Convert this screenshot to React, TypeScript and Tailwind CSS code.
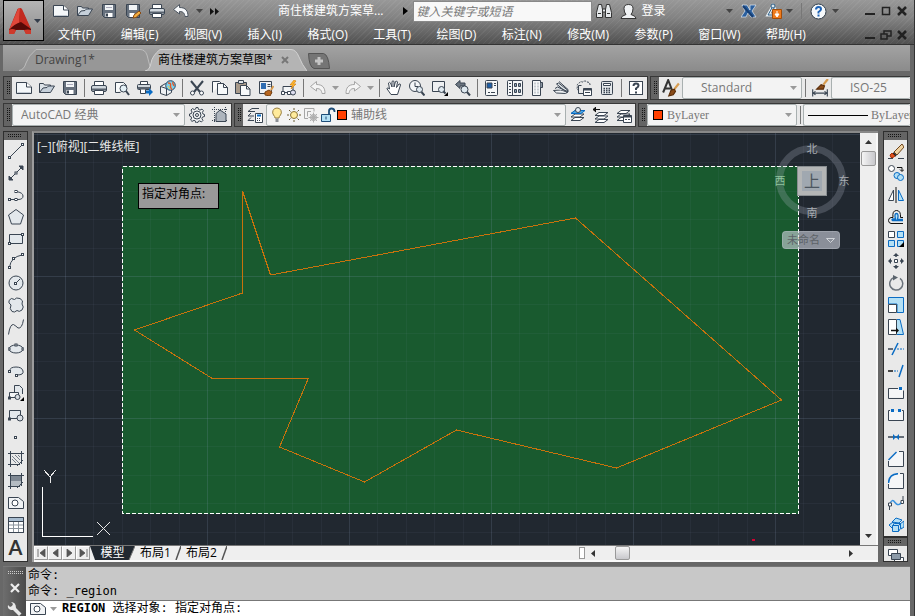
import React from 'react';

type Kids = { children?: React.ReactNode };

const INK = '#3a4552';
const BLUE = '#0a6cc4';
const SKY = '#b4e0f5';

function Icon({ children, size = 16 }: Kids & { size?: number }) {
  return (
    <svg width={size} height={size} viewBox="0 0 16 16" fill="none" stroke={INK} strokeWidth="1" aria-hidden="true" className="shrink-0">
      {children}
    </svg>
  );
}

/* ---------- file icons ---------- */
const NewIcon = () => (
  <Icon><path d="M.5 2.5h10l5 4.5v6.5H.5z" fill="#f4f7f9" /><path d="M10.5 2.5v4.5h5" fill="#fff" /><path d="M1.5 12.5h13" stroke="#c3cad2" /></Icon>
);
const OpenIcon = () => (
  <Icon><path d="M.5 12.5v-9h4l1 1.5h6V7" fill="#dde3e8" /><path d="M.5 12.5 4 8l4-.5 1.500-1.500h6l-4 6.500z" fill="#c6d0da" /></Icon>
);
const SaveIcon = () => (
  <Icon><path d="M1.500 1.500h13v13h-11l-2-2z" fill="#66707d" /><path d="M4 2h8v5H4z" fill="#f1f4f6" stroke="none" /><path d="M4.500 10h7v4h-7z" fill="#fff" stroke="none" /><path d="M5 10.500h2v3H5z" fill={INK} stroke="none" /><path d="M5 4.500h6" stroke="#aab" /></Icon>
);
const SaveAsIcon = () => (
  <Icon><path d="M1.500 1.500h13v13h-11l-2-2z" fill="#66707d" /><path d="M4 2h8v5H4z" fill="#f1f4f6" stroke="none" /><path d="M4.500 10h5v4h-5z" fill="#fff" stroke="none" /><path d="m8 15 1-3 5-4 2 2-5 4.500z" fill="#f6b040" stroke="#8a4b12" /></Icon>
);
const PrintIcon = () => (
  <Icon><path d="M3.500 5V1.500h9V5" fill="#fff" /><rect x=".5" y="5.500" width="15" height="6" rx="1.500" fill="#cfd6dc" /><path d="M1 9.500h14" strokeWidth="2" stroke="#59636f" /><path d="M3.500 10.500h9v4h-9z" fill="#fff" /></Icon>
);
const PreviewIcon = () => (
  <Icon><path d="M1.500 12.500v-10h8l3 3v3M1.500 12.500h5" fill="#f8fafb" /><circle cx="9.500" cy="8.500" r="3.500" fill="#e3f0f6" /><path d="m12 11 3 4" strokeWidth="2" /></Icon>
);
const PublishIcon = () => (
  <Icon><path d="M3.500 4V1.500h7V4" fill="#fff" /><rect x=".5" y="4.500" width="13" height="5" rx="1" fill="#cfd6dc" /><path d="M1 8h12" stroke="#59636f" strokeWidth="2" /><path d="M3.500 9.500v4h5v-4" fill="#fff" /><path d="M9 10.500h3V8l4 4-4 4v-2.500H9z" fill={BLUE} stroke="none" /></Icon>
);
const GlobeIcon = () => (
  <Icon><path d="m.5 6.500 5-3 6 1v8l-5 3-6-2z" fill="#eef1f3" /><path d="m.5 6.500 6 2 5-3M6.500 8.500v7" /><circle cx="10.500" cy="5.500" r="4.800" fill="#7fd0ea" stroke="#246" /><path d="M8 3c2 0 3 0 2.500 3s2 2 1 4M13 2c-1 2 1 3 1 4" stroke="#e0592a" strokeWidth="1.400" /><path d="M8 6c1 1 1 2 2 3" stroke="#f4d23c" /></Icon>
);
const CutIcon = () => (
  <Icon><path d="m2 1 9 11M14 1 5 12" strokeWidth="2" /><circle cx="3.500" cy="13" r="2" fill="#fff" /><circle cx="12.500" cy="13" r="2" fill="#fff" /></Icon>
);
const CopyIcon = () => (
  <Icon><path d="M.5 12.500V1.500h7l2 2" fill="#fafafa" /><path d="M5.500 14.500v-11h6l4 4v7z" fill="#f7f9fa" /><path d="M11.500 3.500v4h4" /></Icon>
);
const PasteIcon = () => (
  <Icon><path d="M.5 2.500h11v11H.5z" fill="#a89a8a" /><path d="M3.500.5h5v3h-5z" fill="#dfe4e8" /><path d="M5.500 15.500v-10h6l3.500 3.500v6.500z" fill="#f7f9fa" /><path d="M11.500 5.500V9H15" /></Icon>
);
const MatchIcon = () => (
  <Icon><path d="M1.500 1.500h12v12h-12z" fill="#f0f2f4" /><path d="M3 3h5v6H3z" fill="#2f6db2" stroke="none" /><path d="M9.500 4.500h3M9.500 6.500h3" /><path d="m15.500 6-2.500 4" stroke="#d79c50" strokeWidth="2" /><path d="m7 12 4-2 3 2-2 4-5-1z" fill="#b8661f" stroke="#7a420f" /></Icon>
);
const BlockEditIcon = () => (
  <Icon><path d="M2 6.500h10v6H2z" fill="#f4f6f7" /><path d="M.5 11.500h3v3h-3zM6.500 11.500h3v3h-3z" fill="#fff" /><circle cx="12" cy="12.500" r="2.500" fill="#dde" /><path d="M13 0 9 5h2.500L10 9l5-5h-2.500L15 1z" fill="#ffb52b" stroke="#cf7a0c" strokeWidth=".6" /></Icon>
);
const UndoIcon = ({ light = false }: { light?: boolean }) => (
  <Icon><path d="M6.500 1.500.5 6.500l6 4.500V8.500c4 0 5 2 5.500 5h3C15 8 13 4.500 6.500 4.500z" fill={light ? '#f6f8fa' : '#f4f4f4'} stroke={light ? '#4c5560' : '#a5a5a5'} /></Icon>
);
const RedoIcon = () => (
  <Icon><path d="m9.500 1.500 6 5-6 4.500V8.500c-4 0-5 2-5.500 5H1C1 8 3 4.500 9.500 4.500z" fill="#f4f4f4" stroke="#a5a5a5" /></Icon>
);
const HandIcon = () => (
  <Icon><path d="M5 14.500 .8 8.500q1-1.500 2.700.5L2.500 3q1-1.300 2 0L6 7V1.500q1-1.300 2 0V7l1.500-5.500q1.500-1 2 .5L10.500 7.500 13 4q1.500-.5 1.500 1l-3 9.500z" fill="#fff" /></Icon>
);
const ZoomClockIcon = () => (
  <Icon><circle cx="6" cy="6" r="5.500" fill="#f4f6f8" /><path d="M6 2.500v4h3" /><circle cx="10.500" cy="9.500" r="3" fill="#dfe9f0" /><path d="m12.500 12 3 3.500" strokeWidth="2" /></Icon>
);
const ZoomWindowIcon = () => (
  <Icon><path d="M.5 1.500h12v10H.5z" fill="#eef0f2" /><circle cx="9.500" cy="9.500" r="3" fill="#dfe9f0" /><path d="m11.500 11.500 2 2" strokeWidth="2" /><path d="M16 12v4h-4z" fill="#000" stroke="none" /></Icon>
);
const ZoomPrevIcon = () => (
  <Icon><path d="M5 .5.5 4.500 5 8.500V6h5V3H5z" fill="#6b7580" /><circle cx="9.500" cy="9.500" r="3.500" fill="#dfe9f0" /><path d="m12 12 3 3.500" strokeWidth="2" /></Icon>
);
const PropsIcon = () => (
  <Icon><rect x="1.500" y=".5" width="12" height="15" rx="1" fill="#f5f7f8" /><path d="M3 3h5v5H3z" fill="#1c5fa8" /><path d="M10 3.500h2M10 5.500h2M4 12.500h2M7 12.500h4" /></Icon>
);
const DesignIcon = () => (
  <Icon><rect x=".5" y=".5" width="15" height="15" rx="1" fill="#f5f7f8" /><path d="M5.500 1v14" /><path d="M2 3.500h2M2 6.500h2M2 9.500h2M2 12.500h2" /><path d="M7.500 3.500h2v3h-2zM11.500 3.500h2v3h-2zM7.500 9.500h2v3h-2zM11.500 9.500h2v3h-2z" fill="#8aa0b5" /></Icon>
);
const PaletteIcon = () => (
  <Icon><path d="M2.500.5h8v15h-8z" fill="#f5f7f8" /><path d="M10.500 2.500h2v5h-2" fill="#8894a0" /><path d="M4.500 3.500h1M7.500 3.500h1M4.500 6.500h1M7.500 6.500h1M4.500 9.500h1M7.500 9.500h1M4.500 12.500h1M7.500 12.500h1" strokeWidth="2" stroke="#9aa3ac" /></Icon>
);
const SheetIcon = () => (
  <Icon><path d="m.5 10.500 7-.5 7.500 2-2.500 1.500-9-.5z" fill="#eef1f3" /><path d="M2 8.500 4.500 7l10 4.500M3.500 4l2-1 9 7-1 2.500z" fill="#dfe4e8" /><path d="m6 1.500 9 8V12" /></Icon>
);
const MarkupIcon = () => (
  <Icon><path d="M3 10.500q-3-1-1.500-3.500-1-3 1.500-3.500 1-2.500 3.500-1.500Q9 0 11 2q3 0 3 3" strokeDasharray="2 1" /><path d="M5.500 5.500h-3v8h5" /><path d="M7.500 8.500h8v7h-8z" fill="#fff" /><path d="M7.500 9.500h8" strokeWidth="2" /><path d="M9 12.500h5" /></Icon>
);
const CalcIcon = () => (
  <Icon><rect x="2.500" y="1.500" width="11" height="13" rx="1" fill="#e4e8eb" /><path d="M4.500 3.500h7v2h-7z" fill="#fff" /><path d="M4.500 8.500h7M4.500 10.500h7M4.500 12.500h7" strokeDasharray="1.500 1" strokeWidth="1.300" /></Icon>
);
const HelpBoxIcon = () => (
  <Icon><rect x="1.500" y="1.500" width="13" height="13" fill="#fff" /><path d="M5.500 6q0-2.500 2.500-2.500t2.500 2.200Q10.500 7 8 8.500V10" strokeWidth="2" /><path d="M7 11.500h2v2H7z" fill={INK} stroke="none" /></Icon>
);
const TextStyleIcon = () => (
  <Icon size={18}><path d="m1 12 4.500-11L9 10M2.500 8.500h5" strokeWidth="1.800" stroke="#333" /><path d="m15 4-4 5" stroke="#d79c50" strokeWidth="2" /><path d="m6 15 2-5 3-1 1 2-2 3z" fill="#8a4b18" stroke="#5a2d08" /></Icon>
);
const DimStyleIcon = () => (
  <Icon size={18}><path d="M1.500 9v6.500M14.500 9v6.500M2 12.500h12" /><path d="m4 11-2 1.500L4 14M12 11l2 1.500-2 1.500" /><path d="m15 0-4 5" stroke="#d79c50" strokeWidth="2" /><path d="m5 9 4-4 3 1-1 3z" fill="#8a4b18" stroke="#5a2d08" /></Icon>
);
const GearIcon = () => (
  <Icon><path d="M7 .5h2l.5 2 1.500.6 2-1 1.400 1.400-1 2 .6 1.500 1.500.5v2l-2 .5-.6 1.500 1 2-1.400 1.400-2-1-1.500.6-.5 1.500H7l-.5-2-1.500-.6-2 1-1.400-1.400 1-2L2 9.500.5 9V7l2-.5L3 5 2 3l1.400-1.400 2 1 1.300-.6z" fill="#eef0f1" /><circle cx="8" cy="8" r="4" /><circle cx="8" cy="8" r="1.500" /></Icon>
);
const WorkspaceIcon = () => (
  <Icon><path d="M2.500 0v16M13.500 0v16M0 2.500h16M0 13.500h16" strokeDasharray="1 1" /><path d="M4 14.500v-8L8 3l6 4v7.500z" fill="#aeb5bd" /></Icon>
);
const Layers = () => <path d="m1 6.500 4-3h9l-4 3zM1 10l4-3h9l-4 3zM1 13.500l4-3h9l-4 3z" fill="#fff" />;
const LayerPropsIcon = () => (
  <Icon><path d="m1 4.500 4-3h7M1 4.500h7M1 9l3-3M1 9h6M1 13.500l3-3M1 13.500h6" /><path d="M8.500 6.500h7v9h-7z" fill="#fff" /><path d="M10 8.500h4" stroke={BLUE} strokeWidth="2" /><path d="M10 11.500h4M10 13.500h4" strokeDasharray="1 1" /></Icon>
);
const LayerCurrentIcon = () => (
  <Icon><Layers /><path d="m1 6.500 4-3h10l-4 3z" fill="#4fa9e6" stroke={BLUE} /><circle cx="8" cy="3" r="2.500" fill="#e6eef4" /></Icon>
);
const LayerPrevIcon = () => (
  <Icon><g transform="translate(1 2)"><Layers /></g><path d="M0 2.500h7M3 0 0 2.500 3 5" stroke="#111" fill="#111" /></Icon>
);
const LayerStateIcon = () => (
  <Icon><Layers /><path d="M7.500 8.500h8v7h-8z" fill="#fff" /><path d="M7.500 9.500h8" strokeWidth="2" /><path d="M9 12.500h5" strokeDasharray="2 1" /></Icon>
);
const BulbIcon = () => (
  <Icon><path d="M6 11Q6 9.500 4.500 8 3 6 4 3.500T8 1t4 2.500T11.500 8Q10 9.500 10 11z" fill="#ffeb9c" stroke="#9a8040" /><path d="M6.500 11.500h3V15h-3z" fill="#8b8f94" stroke="none" /></Icon>
);
const SunIcon = () => (
  <Icon><circle cx="8" cy="8" r="3.500" fill="#ffeb9c" stroke="#8d7433" /><path d="M8 1v2M8 13v2M1 8h2M13 8h2M3 3l1.500 1.500M11.500 11.500 13 13M13 3l-1.500 1.500M4.500 11.500 3 13" stroke="#6b5d35" /></Icon>
);
const VpFreezeIcon = () => (
  <Icon><path d="M11 4.500v-3H1.500v10H5" stroke="#a5a5a5" /><path d="M8 4.500H4.500v5" stroke="#a5a5a5" /><circle cx="10.500" cy="10.500" r="3" fill="#ccc" stroke="#aaa" /><path d="M10.500 5.500v10M5.500 10.500h10M7 7l7 7M14 7l-7 7" stroke="#b0b0b0" /></Icon>
);
const LockIcon = () => (
  <Icon><path d="M9 7.500V4q0-2.500 2.500-2.500T14.500 4v1" strokeWidth="1.800" stroke="#1e4d78" /><path d="M1.500 7.500h9v7h-9z" fill={SKY} stroke="#1e4d78" /><path d="M6 9.500v3" stroke="#1e4d78" /></Icon>
);

/* ---------- draw icons ---------- */
const node = (x: number, y: number) => <rect key={`${x}-${y}`} x={x - 1} y={y - 1} width="2" height="2" fill="#fff" />;
const DRAW: [string, React.ReactNode][] = [
  ['直线', <><path d="m2 14 12-12" />{node(1.5, 14.5)}{node(14.5, 1.5)}</>],
  ['构造线', <><path d="M1 15 15 1" /><path d="M11 1h4v4zM1 11v4h4z" fill={INK} />{node(8, 8)}</>],
  ['多段线', <><path d="M2 12.500h8q5 0 5-3.500T8 4.500" />{node(1.5, 12.5)}{node(8, 12.5)}{node(8, 4.5)}</>],
  ['多边形', <path key="p" d="m8 .5 7.500 5.500-3 9h-9L.5 6z" fill="#e3e8ec" />],
  ['矩形', <><path d="M1.500 3.500h13v9h-13z" fill="#e3e8ec" />{node(1.5, 12.5)}{node(14.5, 3.5)}</>],
  ['圆弧', <><path d="M1.500 14Q3 4 14 2" />{node(1.5, 14.5)}{node(5.5, 5.5)}{node(14.5, 1.5)}</>],
  ['圆', <><circle cx="8" cy="8" r="7" fill="#e3e8ec" /><path d="m8 8 4-4" />{node(7.5, 8.5)}</>],
  ['修订云线', <path key="p" d="M3 8Q0 6 1 3.500 3 0 6.500 2.500 8 0 12 1.500q4 2 2 5.500 2.500 3 0 6-3 2.500-5 .5-2.500 2.500-5 1-3-2.500-1-6.500z" fill="#e3e8ec" />],
  ['样条曲线', <path key="p" d="M.5 15.500Q2 5 5.500 5.500 8 7 10 9q4 1 5.500-8.500" />],
  ['椭圆', <><ellipse cx="8" cy="8" rx="7" ry="4" fill="#e3e8ec" />{node(1, 8)}{node(15, 8)}{node(8, 4)}</>],
  ['椭圆弧', <><path d="M1.500 8Q2 4 8 4t7 4-6 4" fill="#e3e8ec" />{node(1.5, 8.5)}{node(8.5, 12.5)}</>],
  ['插入块', <><path d="M6.500 7V.5h5l3 3V9" fill="#e3e8ec" /><path d="M1.500 7.500h9v5h-9z" fill="#f4f6f7" />{node(1.5, 13)}<circle cx="9.500" cy="12" r="2.500" fill="#d9dee3" /><path d="M16 12v4h-4z" fill="#000" stroke="none" /></>],
  ['创建块', <><path d="M1.500 3.500h11v8h-11z" fill="#e3e8ec" />{node(1.5, 12)}<circle cx="12" cy="11" r="3" fill="#d9dee3" /></>],
  ['点', node(7.5, 8.5)],
  ['图案填充', <><path d="M2.500 0v16M13.500 0v13M0 2.500h16M0 13.500h12" /><path d="m4 5 7 7M4 8l4 4M7 4l5 5M10 4l2 2" stroke="#77818c" /><path d="m9 15 6-6" /></>],
  ['渐变色', <><path d="M3 3h10v10H3z" fill="#b4bbc2" stroke="none" /><path d="M3 3h10v5H3z" fill="#7f8893" stroke="none" /><path d="M2.500 0v16M13.500 0v13M0 2.500h16M0 13.500h12M9 15l6-6" /></>],
  ['面域', <><path d="M.5 2.500h10l5 4v7H.5z" fill="#f1f3f5" /><circle cx="7" cy="8" r="3" fill="#fff" /></>],
  ['表格', <><path d="M.5.5h15v15H.5z" fill="#fff" /><path d="M1 1h14v3.500H1z" fill="#a9bdd0" stroke="none" /><path d="M1 8h14M1 11.500h14M5.500 5v10M10.500 5v10" stroke="#8a939c" /><path d="M.5.5h15v15H.5zM.5 4.500h15" /></>],
];

/* ---------- modify icons ---------- */
const MODIFY: [string, React.ReactNode][] = [
  ['删除', <><path d="M0 15.500h5M10 15.500h6" /><path d="m6 9 8-8 2 3-7 8z" fill="#efd3a2" stroke="#6f451c" /><path d="m5 10 3 3" stroke="#222" strokeWidth="2" /><path d="m2 12 2-2 3 3-2 1.500H3z" fill="#e0501c" stroke="#a4330b" /></>],
  ['复制', <><circle cx="3.500" cy="3.500" r="3" fill="#fff" /><path d="M9 2.500h5V6M12 4.500l2 2 2-2" stroke="#111" /><circle cx="9" cy="10.500" r="3" fill={SKY} stroke={BLUE} /><circle cx="12.500" cy="12.500" r="3" fill={SKY} stroke={BLUE} /></>],
  ['镜像', <><path d="M5.500 3v10.500H.5z" fill="#fff" /><path d="M10.500 3v10.500h5z" fill={SKY} stroke={BLUE} /><path d="M8 0v16" stroke="#111" /></>],
  ['偏移', <><path d="M15 14.500H3q-2.500-.5-2.500-3T3 8.500h2Q4 1.500 8.500 1.500t4 7H15" stroke="#111" /><path d="M15 11.500H4.500q-1-.8 0-1.500h3Q6 4.500 8.500 4.500T9.500 10.500H15" stroke={BLUE} strokeWidth="1.300" fill={SKY} /></>],
  ['阵列', <><path d="M.5.5h6v6h-6z" fill="#fff" /><path d="M9.500.5h6v6h-6zM.5 9.500h6v6h-6zM9.500 9.500h6v6h-6z" fill={SKY} stroke={BLUE} /><path d="M16 11v5h-5z" fill="#000" stroke="none" /></>],
  ['移动', <><path d="M8 1v3M8 12v3M1 8h3M12 8h3" strokeWidth="1.500" /><path d="M6.500 6.500h3v3h-3z" fill="#fff" /><path d="m8 0 3 3H5zM8 16l3-3H5zM0 8l3-3v6zM16 8l-3-3v6z" fill={INK} stroke="none" /></>],
  ['旋转', <><path d="M6 2.500a6.500 6.500 0 1 0 6 .8" strokeWidth="1.500" stroke="#6b737c" /><path d="m5 0 5 2.500-5 3z" fill="#5a636c" stroke="none" /></>],
  ['缩放', <><path d="M.5.5h15v15H9V7H.5z" fill={SKY} stroke={BLUE} /><path d="M.5 7.500h8v8h-8z" fill="#fff" /></>],
  ['拉伸', <><path d="M.5.5h8v15h-8z" fill="#fff" /><path d="M9 .5h3l3.500 15H9" fill={SKY} stroke={BLUE} /><path d="M3 11.500h6" stroke="#111" strokeWidth="1.500" /><path d="m8 8.500 3 3-3 3z" fill="#111" stroke="none" /></>],
  ['修剪', <><path d="M0 8h5" strokeWidth="1.500" /><path d="M4 14 10 2" stroke={BLUE} strokeWidth="1.500" /><path d="M9 8h7" stroke={BLUE} strokeDasharray="2 1" /></>],
  ['延伸', <><path d="M0 8h5" stroke="#111" strokeWidth="1.500" /><path d="M6 8h4" stroke={BLUE} strokeDasharray="2 1" /><path d="m11 14 4-12" stroke={BLUE} strokeWidth="1.500" /></>],
  ['打断于点', <><path d="M1 4h14v8.500H1z" fill="#f5f6f7" stroke="none" /><path d="M.5 13.500v-10H10M.5 13.500h15v-8" /><path d="M11 2h3v3h-3z" fill={BLUE} stroke="none" /></>],
  ['打断', <><path d="M1 4h14v9H1z" fill="#f5f6f7" stroke="none" /><path d="M2 3.500H.5v10h15v-10H14" /><path d="M3 2h3v3H3zM10 2h3v3h-3z" fill={BLUE} stroke="none" /></>],
  ['合并', <><path d="M0 8h16" strokeWidth="1.500" /><path d="M5 5v6l3-3 3 3V5L8 8z" fill={BLUE} stroke="none" /></>],
  ['倒角', <><path d="M.5 9v6.500h15V.5H9L.5 9z" fill="#f5f6f7" stroke="none" /><path d="M.5 10v5.500h15V.5H11" /><path d="m.5 9 8-8" stroke={BLUE} strokeWidth="1.500" /></>],
  ['圆角', <><path d="M.5 10v5.500h15V.5H11Q1 1 .5 10z" fill="#f5f6f7" stroke="none" /><path d="M.5 11v4.500h15V.5H12" /><path d="M.5 10Q1 1 10 .7" stroke={BLUE} strokeWidth="1.500" /></>],
  ['光顺曲线', <><path d="M2 9Q4 3 7 7.500t7-.5" stroke="#3b93e0" strokeWidth="1.500" /><path d="M1.500 8v7M15 1v6" /><path d="M.5 8h3v3h-3zM13 5.500h2.500v3H13z" fill="#fff" /></>],
  ['分解', <><path d="m4 5 4-4 6 2-3 3zM1 8l4-3 2 3-3 3zM12 7l4-3v6l-3 2z" fill={SKY} stroke={BLUE} /><path d="M4.500 8.500h6v6h-6zM4.500 8.500l2-2h6l-2 2M10.500 14.500l2-3v-5" fill={SKY} stroke={BLUE} /></>],
];

/* ---------- small parts ---------- */
function Caret({ color = '#9a9a9a' }: { color?: string }) {
  return <svg width="7" height="4" viewBox="0 0 7 4" aria-hidden="true" className="shrink-0"><path d="M0 0h7L3.500 4z" fill={color} /></svg>;
}
function Tool({ label, children }: Kids & { label: string }) {
  return <button aria-label={label} className="flex w-[23px] shrink-0 items-center justify-center self-stretch">{children}</button>;
}
function More({ color }: { color?: string }) {
  return <button aria-label="更多" className="flex w-3 shrink-0 items-center justify-center self-stretch"><Caret color={color} /></button>;
}
function Sep() {
  return <span className="flex w-1.5 shrink-0 justify-center self-stretch py-0.5"><span className="w-px bg-[#777]" /></span>;
}
const DOTS = 'bg-[conic-gradient(#151515_25%,transparent_0)] bg-[size:2px_2px]';
function Grip() {
  return <span className="flex w-2 shrink-0 items-center justify-center self-stretch bg-[#646464]"><span className={`h-3.5 w-1 ${DOTS}`} /></span>;
}
function Bar({ children, grow = false }: Kids & { grow?: boolean }) {
  return <div className={`flex h-6 items-center border border-[#383838] bg-[#e9e9e9] ${grow ? 'min-w-0 flex-1 border-r-0' : 'shrink-0'}`}><Grip />{children}</div>;
}
function Combo({ label, value, width, pad = 'pl-2', text = 'font-[Open_Sans,Noto_Sans_CJK_SC,sans-serif]', lead, caret = true }: { label: string; value: string; width: string; pad?: string; text?: string; lead?: React.ReactNode; caret?: boolean }) {
  return (
    <label className={`flex h-[22px] items-center overflow-hidden rounded-xs border border-[#a9b0b0] bg-[#f3f3f3] ${width}`}>
      {lead}
      <select aria-label={label} className={`min-w-0 flex-1 appearance-none bg-transparent text-xs text-[#777] outline-none ${pad} ${text}`}>
        <option>{value}</option>
      </select>
      {caret && <span className="shrink-0 pr-1"><Caret /></span>}
    </label>
  );
}
const SwatchBox = () => <span className="h-2.5 w-2.5 shrink-0 border border-black bg-[#ff4000]" />;

/* ---------- title ---------- */
const MENUS = ['文件(F)', '编辑(E)', '视图(V)', '插入(I)', '格式(O)', '工具(T)', '绘图(D)', '标注(N)', '修改(M)', '参数(P)', '窗口(W)', '帮助(H)'];

function WindowButtons({ restore = false }: { restore?: boolean }) {
  return (
    <div className="ml-auto flex shrink-0 items-center pr-1">
      <button aria-label="最小化" className="flex w-4 justify-center"><svg width="10" height="10" viewBox="0 0 10 10"><path d="M0 7h10v2H0z" fill="#222" /></svg></button>
      <button aria-label="最大化" className="flex w-4 justify-center">
        <svg width="12" height="10" viewBox="0 0 12 10" fill="none" stroke="#222" strokeWidth="1.500">{restore ? <path d="M1 4h6v5H1zM4 4V1h7v5H7" /> : <path d="M2.500 1.500h7v7h-7z" />}</svg>
      </button>
      <button aria-label="关闭" className="flex w-4 justify-center"><svg width="10" height="10" viewBox="0 0 10 10"><path d="m1 1 8 8M9 1 1 9" stroke="#222" strokeWidth="2.500" /></svg></button>
    </div>
  );
}

function Header() {
  return (
    <header className="flex h-[45px] shrink-0 border-b border-[#333] bg-[repeating-linear-gradient(135deg,rgba(255,255,255,0.05)_0_1px,transparent_1px_4px),linear-gradient(#989898,#838383_40%,#505050)] pl-[3px]">
      <button aria-label="应用程序菜单" className="flex h-[41px] w-[41px] shrink-0 items-center justify-between border border-black bg-linear-to-b from-[#b4b4b4] to-[#8c8c8c] pr-0.5 pl-1">
        <svg width="24" height="30" viewBox="0 0 24 30" aria-hidden="true">
          <path d="M9.500 3q2-1.500 4 0L23 24v4h-5l-2-4H8l-2 4H1v-4z" fill="#b52218" />
          <path d="M10 3q1-1 2-1l-1 15L1 24z" fill="#e0473a" />
          <path d="M12 2q1 0 2 1l9 20-12-6z" fill="#c22a1f" />
          <path d="M1 24q5-6 12-8l10 7v2q-9-2-16-1z" fill="#560a07" />
          <path d="M1 24q3-2 7 0l-2 4H1zM16 24q4-1 7 0v4h-5z" fill="#cf3a2c" />
        </svg>
        <Caret color="#333c4a" />
      </button>
      <div className="flex min-w-0 flex-1 flex-col">
        <div className="flex h-[22px] items-center text-xs text-white">
          <div className="ml-[5px] flex h-full items-center gap-px">
            <Tool label="新建"><NewIcon /></Tool><Tool label="打开"><OpenIcon /></Tool><Tool label="保存"><SaveIcon /></Tool>
            <Tool label="另存为"><SaveAsIcon /></Tool><Tool label="打印"><PrintIcon /></Tool><Tool label="放弃"><UndoIcon light /></Tool>
            <More color="#444" />
            <button aria-label="展开" className="flex w-4 justify-center"><svg width="9" height="7" viewBox="0 0 9 7"><path d="m0 0 4 3.500L0 7zM5 0l4 3.500L5 7z" fill="#111" /></svg></button>
          </div>
          <h1 className="ml-14 shrink-0">商住楼建筑方案草...</h1>
          <svg width="5" height="8" viewBox="0 0 5 8" aria-hidden="true" className="ml-5 shrink-0"><path d="m0 0 5 4-5 4z" fill="#000" /></svg>
          <input aria-label="搜索" placeholder="键入关键字或短语" className="ml-[5px] h-[21px] w-[179px] shrink-0 border border-[#888] bg-[#f8f8f8] px-0.5 text-xs text-[#666] italic outline-none placeholder:text-[#777]" />
          <button aria-label="查找" className="ml-1 shrink-0">
            <svg width="16" height="16" viewBox="0 0 16 16" fill="#e5e8ea" stroke="#333"><path d="M2.500 1.500h3l1 5v8h-6v-5zM10.500 1.500h3l2 8v5h-6v-8z" /><path d="M6.500 6h3v3h-3zM2 10.500h3M11 10.500h3" /></svg>
          </button>
          <button className="ml-2 flex shrink-0 items-center gap-1">
            <svg width="17" height="17" viewBox="0 0 17 17" fill="#f0f2f4" stroke="#333"><path d="M1 15.500q0-2.500 5-4-2-2-2-6t4.500-4 4.500 4-2 6q5 1.500 5 4z" /></svg>
            登录
          </button>
          <div className="ml-[58px] flex h-full shrink-0 items-center">
            <More color="#444" />
            <button aria-label="Exchange" className="ml-1.5"><svg width="16" height="14" viewBox="0 0 16 14"><path d="M1 1h5l3 5V1h6l-4 6 4 6h-5l-3-4-2 4H0l4-6z" fill="#2a5f9e" stroke="#e4edf5" strokeWidth=".7" /><path d="m2 2 10 11" stroke="#173e73" strokeWidth="2" /></svg></button>
            <button aria-label="连接" className="ml-2"><svg width="18" height="16" viewBox="0 0 18 16"><path d="M8 3 3 12h10z" fill="none" stroke="#e8f0f5" strokeWidth="3" /><path d="M8 3 3 12h8z" fill="none" stroke="#2c5d85" /><circle cx="8" cy="3" r="2" fill="#dbe6ee" stroke="#2c5d85" /><path d="M7.500 6.500h9v9h-9z" fill="#f07c1d" stroke="#a34c08" /><path d="M12 8v3m-2 0h4l-2 3z" fill="#fff" stroke="#fff" /></svg></button>
            <More color="#444" />
            <span className="mx-1.5 h-4 w-px bg-[#777]" />
            <button aria-label="帮助" className="ml-0.5"><svg width="17" height="17" viewBox="0 0 17 17"><circle cx="8.500" cy="8.500" r="7.500" fill="#f6f9fb" stroke="#34404c" /><path d="M6 6.500Q6 4 8.500 4T11 6.300Q11 7.500 8.500 9v1.500" fill="none" stroke="#1d62b5" strokeWidth="2" /><path d="M7.500 11.500h2v2h-2z" fill="#1d62b5" /></svg></button>
            <span className="ml-0.5 flex h-full"><More color="#444" /></span>
          </div>
          <WindowButtons />
        </div>
        <div className="flex h-[22px] items-center pt-[3px] text-xs text-white">
          <nav className="flex w-[762px] shrink-0 justify-between pl-3.5">
            {MENUS.map((m) => <button key={m}>{m}</button>)}
          </nav>
          <WindowButtons restore />
        </div>
      </div>
    </header>
  );
}

function FileTabs() {
  return (
    <div className="mr-1 ml-[3px] flex h-[26px] shrink-0 items-end bg-linear-to-b from-[#a3a3a3] to-[#8b8b8b] pl-4 text-xs">
      <button className="relative flex h-[22px] w-[132px] items-center pl-4 text-[#444]">
        <svg width="132" height="22" viewBox="0 0 132 22" aria-hidden="true" className="absolute inset-0"><path d="M0 21.500Q5 21 7 14T17 .5H121Q126 .5 128 6l4 15.500" fill="#979797" stroke="#bdbdbd" /></svg>
        <span className="relative">Drawing1*</span>
      </button>
      <div className="relative -ml-1.5 flex h-[22px] w-[162px] items-center justify-between pr-[18px] pl-[13px] text-black">
        <svg width="162" height="22" viewBox="0 0 162 22" aria-hidden="true" className="absolute inset-0"><path d="M0 22Q5 21 6 14T15 .5H146Q151 .5 154 8T162 22" fill="#b4b4b4" stroke="#d2d2d2" /></svg>
        <button className="relative">商住楼建筑方案草图*</button>
        <button aria-label="关闭图形" className="relative"><svg width="8" height="8" viewBox="0 0 8 8"><path d="m1 1 6 6M7 1 1 7" stroke="#777" strokeWidth="2" /></svg></button>
      </div>
      <button aria-label="新图形" className="mb-0.5"><svg width="24" height="16" viewBox="0 0 24 16"><path d="M1.500.5h15q5 1 6 15H7Q2 14 1.500.5z" fill="#757575" stroke="#555" /><path d="M12 4v8M8 8h8" stroke="#c4c4c4" strokeWidth="3" /></svg></button>
    </div>
  );
}

function Toolbars() {
  return (
    <div className="mr-1 ml-[3px] flex shrink-0 flex-col gap-[3px] pt-[5px]">
      <div className="flex gap-0.5">
        <Bar>
          <Tool label="新建"><NewIcon /></Tool><Tool label="打开"><OpenIcon /></Tool><Tool label="保存"><SaveIcon /></Tool><Sep />
          <Tool label="打印"><PrintIcon /></Tool><Tool label="预览"><PreviewIcon /></Tool><Tool label="发布"><PublishIcon /></Tool><Tool label="三维打印"><GlobeIcon /></Tool><Sep />
          <Tool label="剪切"><CutIcon /></Tool><Tool label="复制"><CopyIcon /></Tool><Tool label="粘贴"><PasteIcon /></Tool><Tool label="特性匹配"><MatchIcon /></Tool><Tool label="块编辑器"><BlockEditIcon /></Tool><Sep />
          <Tool label="放弃"><UndoIcon /></Tool><More /><Tool label="重做"><RedoIcon /></Tool><More /><Sep />
          <Tool label="平移"><HandIcon /></Tool><Tool label="实时缩放"><ZoomClockIcon /></Tool><Tool label="窗口缩放"><ZoomWindowIcon /></Tool><Tool label="缩放上一个"><ZoomPrevIcon /></Tool><Sep />
          <Tool label="特性"><PropsIcon /></Tool><Tool label="设计中心"><DesignIcon /></Tool><Tool label="工具选项板"><PaletteIcon /></Tool><Tool label="图纸集"><SheetIcon /></Tool><Tool label="标记集"><MarkupIcon /></Tool><Tool label="计算器"><CalcIcon /></Tool><Sep />
          <Tool label="帮助"><HelpBoxIcon /></Tool>
        </Bar>
        <Bar grow>
          <Tool label="文字样式"><TextStyleIcon /></Tool>
          <Combo label="文字样式列表" value="Standard" width="w-[120px] shrink-0" pad="pl-[18px]" />
          <Sep />
          <Tool label="标注样式"><DimStyleIcon /></Tool>
          <Combo label="标注样式列表" value="ISO-25" width="min-w-0 flex-1 border-r-0" pad="pl-[18px]" caret={false} />
        </Bar>
      </div>
      <div className="flex gap-0.5">
        <Bar>
          <Combo label="工作空间" value="AutoCAD 经典" width="w-[173px]" pad="pl-2" />
          <Tool label="工作空间设置"><GearIcon /></Tool><Tool label="我的工作空间"><WorkspaceIcon /></Tool>
        </Bar>
        <Bar>
          <Tool label="图层特性"><LayerPropsIcon /></Tool>
          <Combo label="图层" value="辅助线" width="w-[300px]" pad="pl-1" lead={<span className="flex shrink-0 items-center gap-px pl-0.5"><BulbIcon /><SunIcon /><VpFreezeIcon /><LockIcon /><SwatchBox /></span>} />
          <Tool label="置为当前"><LayerCurrentIcon /></Tool><Tool label="上一个图层"><LayerPrevIcon /></Tool><Tool label="图层状态"><LayerStateIcon /></Tool>
        </Bar>
        <Bar grow>
          <Combo label="颜色" value="ByLayer" width="w-[150px] shrink-0" pad="pl-1" text="font-[Liberation_Serif,serif]" lead={<span className="flex shrink-0 pl-[5px]"><SwatchBox /></span>} />
          <Sep />
          <Combo label="线型" value="ByLayer" width="min-w-0 flex-1 border-r-0" pad="pl-[3px]" text="font-[Liberation_Serif,serif]" caret={false} lead={<span className="ml-1 h-px w-[60px] shrink-0 bg-black" />} />
        </Bar>
      </div>
    </div>
  );
}

function SideBar({ tools, children, label }: Kids & { tools: [string, React.ReactNode][]; label: string }) {
  return (
    <div role="toolbar" aria-label={label} className="flex min-h-0 w-[25px] shrink flex-col items-center overflow-hidden border border-[#2f2f2f] bg-[#e9e9e9]">
      <span className="flex h-2 w-full shrink-0 items-center bg-[#646464] pl-[3px]"><span className={`h-1 w-3.5 ${DOTS}`} /></span>
      {tools.map(([name, art]) => (
        <button key={name} aria-label={name} className="flex h-[22px] w-full shrink-0 items-center justify-center"><Icon>{art}</Icon></button>
      ))}
      {children}
    </div>
  );
}

const GRID = 142;
const minors = Array.from({ length: 60 }, (_, i) => i);

function Canvas() {
  return (
    <div className="relative min-w-0 flex-1 overflow-hidden bg-[#212830]">
      <svg width="100%" height="100%" aria-hidden="true" className="absolute inset-0" shapeRendering="crispEdges" fill="none">
        <rect x="88" y="33" width="677" height="348" fill="#195a2f" />
        {minors.map((i) => {
          const x = Math.round((i - 1) * GRID / 5) + 31.5;
          const y = Math.round((i - 1) * GRID / 5) + 1.5;
          const c = (i - 1) % 5 === 0 ? 'rgba(150,165,200,0.17)' : 'rgba(150,165,200,0.06)';
          return <g key={i} stroke={c}><path d={`M${x} 0v3000`} /><path d={`M0 ${y}h5000`} /></g>;
        })}
        <rect x="88.500" y="33.500" width="676" height="347" stroke="#fff" strokeDasharray="4 2" />
        <path d="m208.500 58 28 84 305-57 206 182-165 68-160-38-92 52-85-35 29-69h-97l-77-48 108-37z" stroke="#c8720c" />
        <path d="M8.500 354v49.500h50" stroke="#fff" />
        <path d="m10 337 6 7 6-7M16.500 344v6M63 389l13 13M76 389l-13 13" stroke="#e8e8e8" />
        <path d="M718 406h3v2h-3z" fill="#d00030" />
      </svg>
      <p className="absolute top-1.5 left-[3px] text-xs leading-4 text-[#e8e8e8]">[−][俯视][二维线框]</p>
      <p className="absolute top-[50px] left-[104px] w-[81px] border border-black bg-[#999] px-[3px] pt-px pb-[5px] text-xs leading-[18px] text-black">指定对角点:</p>
      <div className="absolute top-3 right-3.5 h-[70px] w-[70px] rounded-full border-[7px] border-[#b4b8c8]/25" />
      <div className="absolute top-2 right-2 grid h-20 w-20 grid-cols-[16px_1fr_16px] grid-rows-[16px_1fr_16px] items-center justify-items-center text-[11px] leading-4 text-[#a8acb2]">
        <button className="col-start-2">北</button>
        <button className="col-start-1 row-start-2 text-[#8fc49d]">西</button>
        <button className="col-start-2 row-start-2 flex h-[30px] w-[30px] items-center justify-center border border-[#8a8f92] bg-[#b4b6b6] text-base text-[#4c5660]"><span className="flex h-5 w-5 items-center justify-center bg-[#a0a8b0]">上</span></button>
        <button className="col-start-3 row-start-2">东</button>
        <button className="col-start-2 row-start-3">南</button>
      </div>
      <button className="absolute top-[98px] right-5 flex h-[18px] w-[58px] items-center justify-between rounded border border-[#c8ccd4]/30 bg-[#d0d4e0]/60 px-1 text-[11px] text-[#5d6368]">
        未命名
        <svg width="9" height="5" viewBox="0 0 9 5" fill="none" stroke="#d0d4d8"><path d="M.5.5h8l-4 4z" /></svg>
      </button>
    </div>
  );
}

const NAV = ['M2 0v8M9 0v8L4 4z', 'M8 0v8L3 4z', 'M3 0v8l5-4z', 'M9 0v8M2 0v8l5-4z'];

function Viewport() {
  return (
    <main className="flex min-w-0 flex-1 flex-col border-2 border-r-0 border-b-0 border-[#9c9c9c] border-t-[#888]">
      <div className="flex min-h-0 flex-1">
        <Canvas />
        <div className="flex w-[18px] shrink-0 flex-col items-center border-r-2 border-[#fafafa] bg-[#eee]">
          <button aria-label="向上滚动" className="flex h-[18px] items-center"><svg width="7" height="4" viewBox="0 0 7 4"><path d="M0 4h7L3.500 0z" fill="#333" /></svg></button>
          <span className="h-[15px] w-[15px] rounded-xs border border-[#999] bg-linear-to-r from-[#f5f5f5] to-[#c8c8cc]" />
          <button aria-label="向下滚动" className="mt-auto flex h-[18px] items-center"><svg width="7" height="4" viewBox="0 0 7 4"><path d="M0 0h7L3.500 4z" fill="#333" /></svg></button>
        </div>
      </div>
      <div className="flex h-[17px] shrink-0 items-center border-t border-b-2 border-t-[#777] border-b-[#fafafa] bg-[#efefef] text-xs leading-[14px] text-black">
        {NAV.map((d) => (
          <button key={d} aria-label="切换布局" className="flex h-3.5 w-3.5 shrink-0 items-center justify-center border border-[#999] border-l-white border-t-white"><svg width="11" height="8" viewBox="0 0 11 8" fill="#555" stroke="#555"><path d={d} strokeWidth=".8" /></svg></button>
        ))}
        <button className="relative flex h-full w-[45px] items-center justify-center text-white">
          <svg width="45" height="14" viewBox="0 0 45 14" aria-hidden="true" className="absolute inset-0"><path d="M0 0h45l-6 14H5z" fill="#212830" /><path d="m45 0-6 14" stroke="#777" /></svg>
          <span className="relative">模型</span>
        </button>
        {['布局1', '布局2'].map((t) => (
          <button key={t} className="flex h-full shrink-0 items-center gap-1 pl-[5px] whitespace-nowrap">
            {t}
            <svg width="6" height="14" viewBox="0 0 6 14" aria-hidden="true"><path d="M6 0 1 14" stroke="#555" strokeWidth="1.500" /></svg>
          </button>
        ))}
        <div className="ml-auto flex h-full w-[299px] shrink-0 items-center">
          <span className="h-3 w-1.5 border border-[#999] bg-white" />
          <button aria-label="向左滚动" className="ml-1.5"><svg width="4" height="7" viewBox="0 0 4 7"><path d="M4 0v7L0 3.500z" fill="#333" /></svg></button>
          <span className="ml-5 h-3.5 w-[15px] rounded-xs border border-[#999] bg-linear-to-b from-[#f5f5f5] to-[#c8c8cc]" />
          <button aria-label="向右滚动" className="mr-[25px] ml-auto"><svg width="4" height="7" viewBox="0 0 4 7"><path d="M0 0v7l4-3.500z" fill="#333" /></svg></button>
        </div>
      </div>
    </main>
  );
}

function CommandLine() {
  return (
    <section className="mr-1 ml-[3px] flex h-[50px] shrink-0 overflow-hidden border-t border-[#777]">
      <div className="flex w-[23px] shrink-0 flex-col items-center bg-linear-to-r from-[#6e6e6e] to-[#4a4a4a]">
        <span className="mt-1 h-[5px] w-4 bg-[conic-gradient(#ccc_25%,transparent_0)] bg-[size:2px_2px]" />
        <button aria-label="关闭命令行" className="mt-2"><svg width="10" height="10" viewBox="0 0 10 10"><path d="m1 1 8 8M9 1 1 9" stroke="#eee" strokeWidth="2.200" /></svg></button>
        <button aria-label="自定义" className="mt-2"><svg width="15" height="15" viewBox="0 0 15 15"><path d="M4 1 6 3 5 5 3 6 1 4q-1 4 3 5h2l6 6 2.500-2.500L9 7q0-6-5-6z" fill="#e8e8e8" /></svg></button>
      </div>
      <div className="flex min-w-0 flex-1 flex-col bg-white font-[DejaVu_Sans_Mono,Noto_Sans_CJK_SC,monospace] text-xs text-black">
        <div className="h-[34px] shrink-0 border-b border-[#777] bg-[#c8c8c8] pl-0.5 leading-4 whitespace-pre">
          <p>命令:</p>
          <p>命令: _region</p>
        </div>
        <label className="flex min-h-0 flex-1 items-center gap-1 pl-1 leading-[15px] whitespace-pre">
          <Icon><path d="M.5 2.500h10l5 4v7H.5z" fill="#f1f3f5" /><circle cx="7" cy="8" r="3" fill="#fff" /></Icon>
          <Caret />
          <p className="pl-px"><b>REGION</b> 选择对象: 指定对角点:</p>
          <input aria-label="命令" className="h-3.5 min-w-0 flex-1 outline-none" />
        </label>
      </div>
    </section>
  );
}

export default function App() {
  return (
    <div className="flex h-screen w-full flex-col overflow-hidden border-r border-[#333] bg-[#686868] font-[Open_Sans,Noto_Sans_CJK_SC,sans-serif]">
      <Header />
      <FileTabs />
      <Toolbars />
      <div className="mt-1 mr-[6px] mb-1 ml-[3px] flex min-h-0 flex-1">
        <SideBar label="绘图" tools={DRAW}>
          <button aria-label="多行文字" className="flex h-[22px] w-full shrink-0 items-center justify-center font-[Lato,sans-serif] text-xl leading-none font-bold text-[#333]">A</button>
          <button aria-label="添加选定对象" className="flex h-[22px] w-full shrink-0 items-center justify-center"><Icon><circle cx="5" cy="5" r="3" fill="#58a83c" /><circle cx="11" cy="9" r="3" fill="#5b8fd0" /></Icon></button>
        </SideBar>
        <span className="w-1 shrink-0" />
        <Viewport />
        <span className="w-[5px] shrink-0" />
        <div className="flex min-h-0 w-[25px] shrink-0 flex-col">
          <div className="flex shrink-0"><SideBar label="修改" tools={MODIFY} /></div>
          <SideBar label="绘图次序" tools={[['前置', <><path d="M.5.500h9v6h-9z" fill="#fff" /><path d="M6.500 8.500h9v6h-9z" fill="#fff" /><path d="M3.500 4.500h9v6h-9z" fill="#8c9aa8" /></>]]} />
        </div>
      </div>
      <CommandLine />
    </div>
  );
}
